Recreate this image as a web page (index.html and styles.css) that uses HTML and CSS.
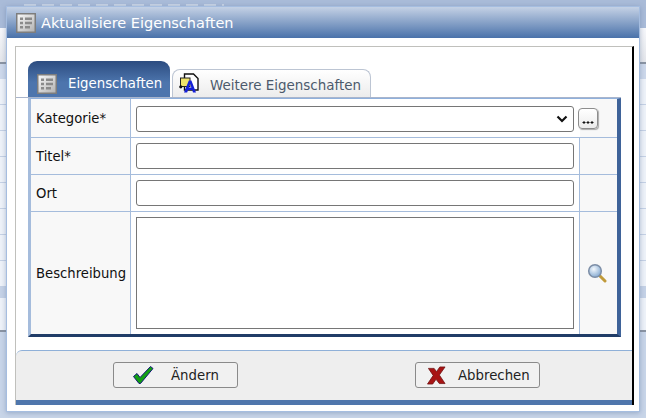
FILE: index.html
```html
<!DOCTYPE html>
<html lang="de">
<head>
<meta charset="utf-8">
<title>Aktualisiere Eigenschaften</title>
<link rel="stylesheet" href="styles.css">
</head>
<body>
<div class="backdrop">
  <div class="bd-top"><div class="bd-smudge"></div></div>
  <div class="bd-white"></div>
  <div class="bd-line"></div>
  <div class="bd-head"></div>
  <div class="bd-row"></div>
  <div class="bd-row"></div>
  <div class="bd-row"></div>
  <div class="bd-row"></div>
  <div class="bd-row"></div>
  <div class="bd-row"></div>
  <div class="bd-row"></div>
  <div class="bd-row"></div>
  <div class="bd-band"></div>
  <div class="bd-tall"></div>
  <div class="bd-line"></div>
  <div class="bd-bottom"><span class="bd-org">Organisation</span></div>
</div>
<section class="dialog">
  <header class="titlebar">
    <svg class="icon-list" viewBox="0 0 20 20"><use href="#list"/></svg>
    <h1 class="title">Aktualisiere Eigenschaften</h1>
  </header>
  <div class="dialog-body">
    <div class="inner">
      <div class="tabs">
        <div class="tab tab-active">
          <svg class="icon-list" viewBox="0 0 20 20">
            <defs>
              <linearGradient id="lg" x1="0" y1="0" x2="1" y2="1"><stop offset="0" stop-color="#fbfbfb"/><stop offset="1" stop-color="#b0b0b0"/></linearGradient>
              <g id="list">
                <rect x="0.75" y="0.75" width="18.5" height="18.5" fill="url(#lg)" stroke="#7d7d7d" stroke-width="1.500"/>
                <path d="M4 4.500h3v2.500H4zM9 4.500h7v2.500H9zM4 8.800h3v2.500H4zM9 8.800h7v2.500H9zM4 13h3v2.500H4zM9 13h5v2.500H9z" fill="#8a8a8a"/>
              </g>
            </defs>
            <use href="#list"/>
          </svg>
          <span>Eigenschaften</span>
        </div>
        <div class="tab tab-idle">
          <svg class="icon-doc" viewBox="0 0 20 20">
            <path d="M5.500 1h9l4.500 4.500V17H5.500z" fill="#fff" stroke="#111" stroke-width="1.400"/>
            <rect x="1.500" y="5" width="9.500" height="8.500" fill="#efe36a" stroke="#222"/>
            <circle cx="1.800" cy="13.800" r="1.600" fill="#111"/>
            <path d="M5 19.500 9.800 7.500h2.600L17 19.500h-3l-.8-2.500H9l-.8 2.500zM9.800 14.600h2.600l-1.300-3.800z" fill="#1420d8"/>
          </svg>
          <span>Weitere Eigenschaften</span>
        </div>
      </div>
      <div class="form-grid">
        <div class="row row-a">
          <div class="label">Kategorie*</div>
          <div class="field"><select class="ctl select"><option></option></select></div>
          <div class="extra">
            <span class="dots-btn"><svg viewBox="0 0 12 3" class="dots"><path d="M2 0v3M.5 1.500h3M6 0v3M4.500 1.500h3M10 0v3M8.500 1.500h3" stroke="#111" stroke-width="1"/></svg></span>
          </div>
        </div>
        <div class="row row-b">
          <div class="label">Titel*</div>
          <div class="field"><input class="ctl" type="text"></div>
          <div class="extra"></div>
        </div>
        <div class="row row-c">
          <div class="label">Ort</div>
          <div class="field"><input class="ctl" type="text"></div>
          <div class="extra"></div>
        </div>
        <div class="row row-d">
          <div class="label">Beschreibung</div>
          <div class="field"><textarea class="ctl area"></textarea></div>
          <div class="extra">
            <svg class="icon-search" viewBox="0 0 20 20">
              <defs><radialGradient id="glass" cx="0.4" cy="0.35" r="0.7"><stop offset="0" stop-color="#f3f8fd"/><stop offset="1" stop-color="#7fa6cf"/></radialGradient></defs>
              <path d="M12.500 12.500 18 18" stroke="#c09a3a" stroke-width="3" stroke-linecap="round"/>
              <circle cx="8" cy="8" r="6.300" fill="url(#glass)" stroke="#7d8ea6" stroke-width="1.500"/>
            </svg>
          </div>
        </div>
      </div>
      <footer class="footer">
        <div class="actions">
          <button class="btn btn-ok" type="button">
            <svg class="icon-btn" viewBox="0 0 22 20"><path d="M1.500 11.500 5 8.500l3 4L18.500 1.500l2.500 2-12.500 15h-1.500z" fill="#12a012" stroke="#14147a" stroke-width="1"/></svg>
            <span>Ändern</span>
          </button>
          <button class="btn btn-cancel" type="button">
            <svg class="icon-btn icon-x" viewBox="0 0 20 20"><path d="M1.500 2.500h6l2.500 3.500 3.500-5H19l-6 8.500 6 9h-6L9.500 14 6 19H0.500l6-9z" fill="#a81414" stroke="#6e1010" stroke-width=".8"/></svg>
            <span>Abbrechen</span>
          </button>
        </div>
        <div class="footer-stripe"></div>
      </footer>
    </div>
  </div>
</section>
</body>
</html>
```
FILE: styles.css
```css
* { box-sizing: border-box; }
html, body { margin: 0; height: 100%; overflow: hidden; }
body {
  position: relative;
  width: 646px;
  height: 418px;
  background: #c8d5e8;
  font-family: "DejaVu Sans", sans-serif;
  font-size: 13px;
  color: #111;
}

.backdrop { display: flex; flex-direction: column; height: 418px; }
.bd-top { height: 28px; background: #a9bbd8; padding: 4px 0 0 24px; }
.bd-smudge { width: 200px; height: 2px; background: repeating-linear-gradient(90deg, #c9d5e6 0 12px, transparent 12px 18px); }
.bd-white { height: 34px; background: linear-gradient(#f7f8fb, #e4e6ea); }
.bd-line { height: 2px; background: #8a93a1; flex: none; }
.bd-head { height: 15px; background: #cdd8ea; }
.bd-row { height: 26px; background: #eef2f8; border-bottom: 1px solid #c5d1e4; }
.bd-band { height: 11px; background: #c5d2e6; }
.bd-tall { flex: none; height: 32px; background: #eef2f8; }
.bd-bottom { flex: 1; background: #c8d5e8; position: relative; }
.bd-org { position: absolute; left: 432px; top: 58px; color: #eef2f8; font-size: 14px; line-height: 14px; }

.dialog {
  position: absolute;
  left: 6px;
  top: 6px;
  width: 634px;
  height: 406px;
  background: #fff;
  border: 1px solid #a5bde0;
  box-shadow: 0 1px 5px rgba(90, 115, 160, .45);
  display: flex;
  flex-direction: column;
}
.titlebar {
  height: 31px;
  flex: none;
  display: flex;
  align-items: center;
  gap: 5px;
  padding: 0 0 0 9px;
  background: linear-gradient(#c4d1e5, #4a72aa);
}
.title { margin: 0; font-size: 14.500px; font-weight: normal; color: #fff; white-space: nowrap; }
.icon-list { width: 20px; height: 20px; flex: none; }

.dialog-body { flex: 1; padding: 8px 5px 6px 8px; min-height: 0; }
.inner {
  height: 100%;
  border-top: 1px solid #c0c0bc;
  border-left: 1px solid #c0c0bc;
  border-right: 2px solid #000;
  display: flex;
  flex-direction: column;
  padding-top: 14px;
}

.tabs { display: flex; align-items: flex-end; gap: 2px; padding-left: 12px; height: 37px; flex: none; width: 605px; border-bottom: 1px solid #a9b5cc; }
.tab { display: flex; align-items: center; white-space: nowrap; font-size: 13.300px; }
.tab-active {
  width: 142px;
  height: 36px;
  padding: 9px 0 0 9px;
  gap: 11px;
  border-radius: 9px 9px 0 0;
  background: linear-gradient(#2c4c80, #4d75ad 60%);
  color: #fff;
}
.tab-idle {
  width: 199px;
  height: 28px;
  padding: 4px 0 0 6px;
  gap: 11px;
  border: 1px solid #bcc5d3;
  border-bottom: 0;
  border-radius: 8px 8px 0 0;
  background: linear-gradient(#fff, #ececec);
  color: #4c5a6c;
  font-size: 13.450px;
}
.icon-doc { width: 20px; height: 20px; flex: none; margin-top: -5px; }

.form-grid {
  margin-left: 12px;
  width: 593px;
  flex: none;
  border-left: 3px solid #a5bcdc;
  border-top: 1px solid #8fb0dc;
  border-right: 4px solid #3f6399;
  border-bottom: 3px solid #203c67;
  display: flex;
  flex-direction: column;
}
.row { display: grid; grid-template-columns: 100px 449px 1fr; border-bottom: 1px solid #a5bcdc; }
.row:last-child { border-bottom: 0; }
.row-a { height: 39px; }
.row-a > * { padding-top: 1px; }
.row-b { height: 37px; }
.row-c { height: 37px; }
.row-d { height: 122px; }
.label { display: flex; align-items: center; padding-left: 5px; background: #f8f8f8; border-right: 1px solid #a5bcdc; font-size: 13.200px; white-space: nowrap; }
.field { display: flex; align-items: center; padding-left: 5px; padding-right: 5px; background: #fff; border-right: 1px solid #a5bcdc; }
.row-a .field { border-right: 0; }
.extra { display: flex; align-items: center; justify-content: center; background: #f8f8f8; }
.row-a .extra { justify-content: flex-start; background: #f8f8f8; }
.ctl {
  width: 438px;
  height: 26px;
  margin: 0;
  border: 1px solid #767676;
  border-radius: 3px;
  background: #fff;
  font: inherit;
}
.select {
  appearance: none;
  color: #111;
  background: #fff url("data:image/svg+xml,%3Csvg xmlns='http://www.w3.org/2000/svg' width='12' height='8'%3E%3Cpath d='M1.500 1.500 6 6l4.500-4.500' fill='none' stroke='%23111' stroke-width='2.200'/%3E%3C/svg%3E") no-repeat right 5px center;
}
.area { height: 112px; border-radius: 0; resize: none; display: block; }

.dots-btn {
  width: 20px;
  height: 21px;
  margin-left: -2px;
  display: flex;
  align-items: flex-end;
  justify-content: center;
  padding-bottom: 4px;
  border: 1px solid #8d8d8d;
  border-radius: 4px;
  background: linear-gradient(#fff, #ececec);
  box-shadow: 1px 1px 1px #aaa;
  flex: none;
}
.dots { width: 12px; height: 3px; }
.icon-search { width: 20px; height: 20px; margin-right: 4px; }

.footer {
  margin-top: 13px;
  flex: 1;
  display: flex;
  flex-direction: column;
  background: #eee;
  border-top: 1px solid #8fb0d8;
  border-top-left-radius: 6px;
}
.actions { flex: 1; display: flex; padding: 11px 0 0 97px; gap: 177px; }
.footer-stripe { height: 5px; background: #4f76ac; flex: none; }
.btn {
  width: 125px;
  height: 26px;
  padding: 0;
  display: flex;
  align-items: center;
  border: 1px solid #8a8a8a;
  border-radius: 3px;
  background: #f1f1f1;
  color: #222;
  font: inherit;
  font-size: 13.300px;
}
.btn-ok { padding-left: 18px; gap: 17px; }
.btn-cancel { padding-left: 11px; gap: 12px; }
.icon-btn { width: 22px; height: 20px; flex: none; }
.icon-x { width: 19px; height: 19px; }
```
